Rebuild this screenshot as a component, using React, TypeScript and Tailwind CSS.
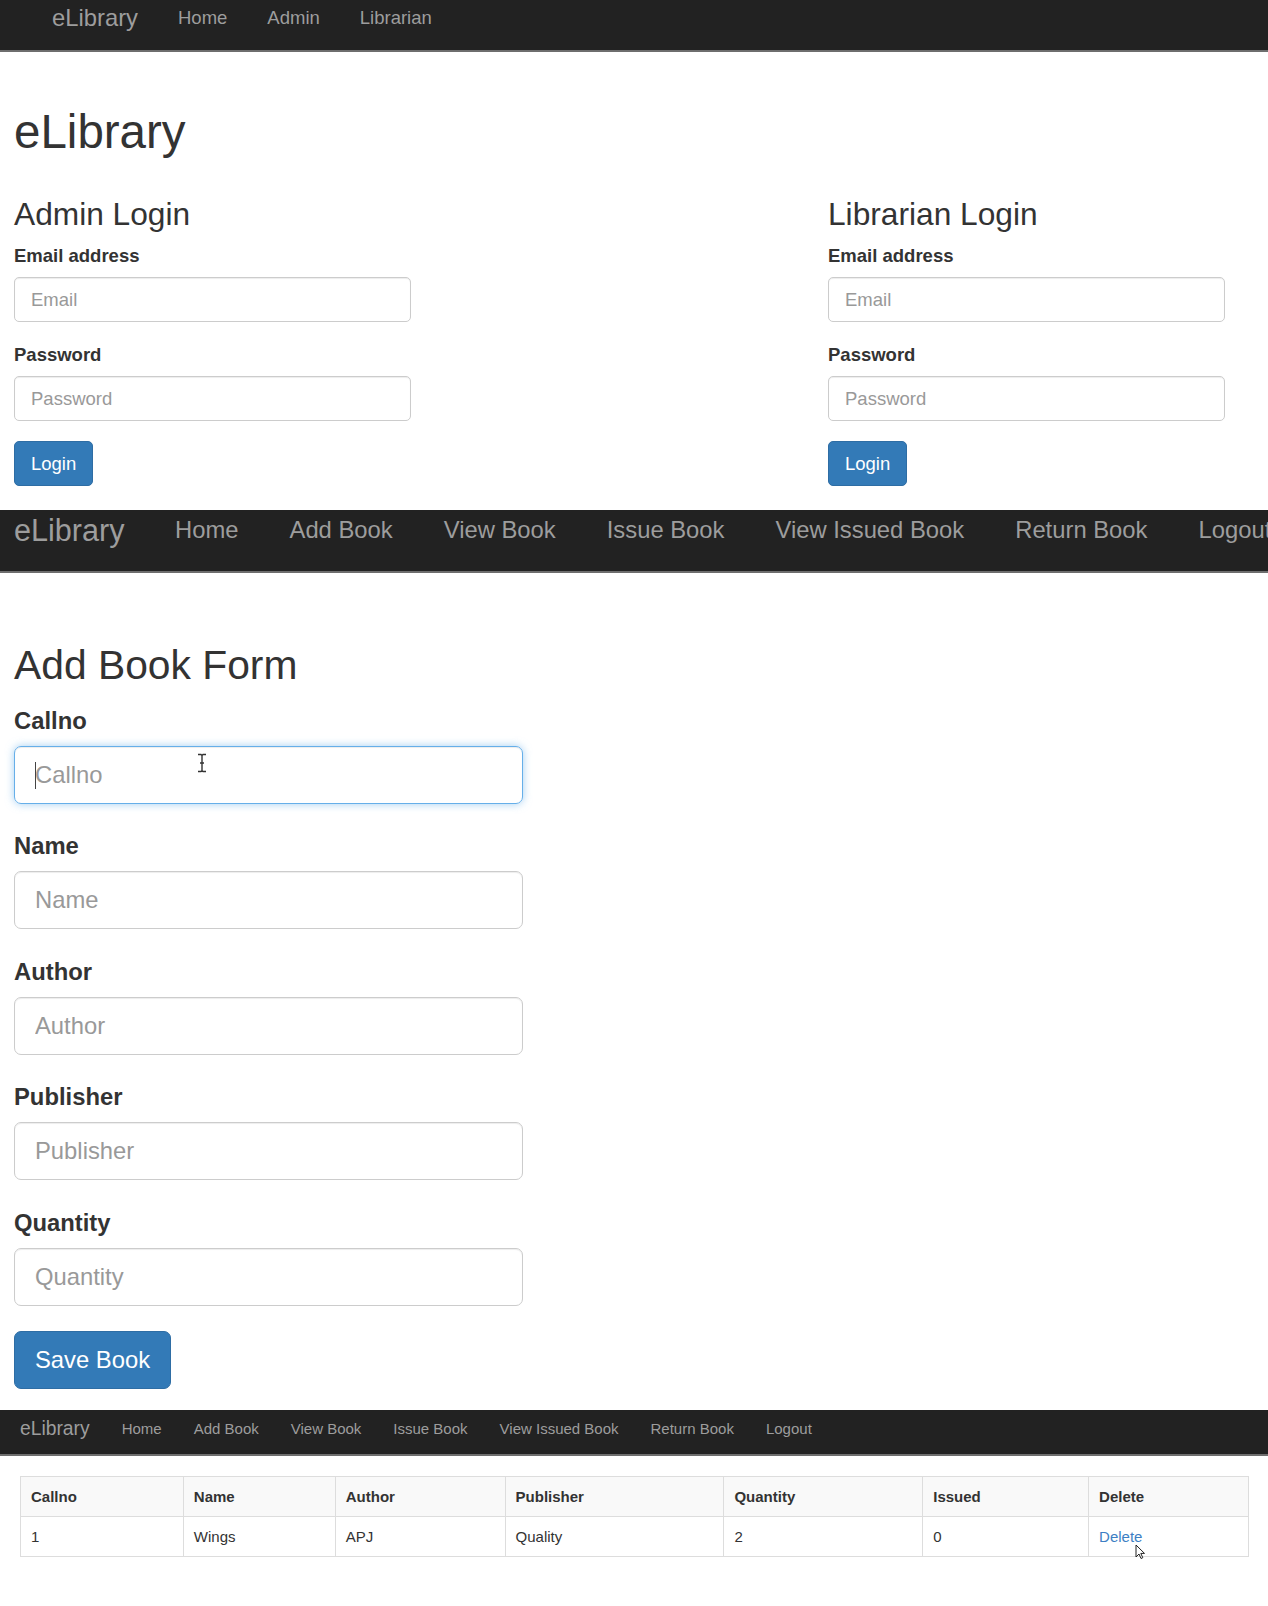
import React from 'react';

interface NavbarProps {
  items: string[];
  wrap: string;
  brand: string;
  link: string;
}

// dark bootstrap-like navbar, sizes passed in as full class strings
const Navbar: React.FC<NavbarProps> = ({ items, wrap, brand, link }) => (
  <nav className={`bg-[#222] border-b-2 border-[#6e6e6e] flex items-start whitespace-nowrap overflow-hidden ${wrap}`}>
    <span className={`text-[#9d9d9d] ${brand}`}>eLibrary</span>
    {items.map((item) => (
      <span key={item} className={`text-[#9d9d9d] ${link}`}>
        {item}
      </span>
    ))}
  </nav>
);

const LoginBox: React.FC<{ title: string }> = ({ title }) => (
  <div>
    <h3 className="mt-[39px] text-[31.7px] leading-[1.1] text-[#333]">{title}</h3>
    <div className="mt-[11px] mb-[20px]">
      <label className="block text-[18.5px] leading-[26px] font-bold text-[#333] mb-[8px]">Email address</label>
      <input
        placeholder="Email"
        className="block h-[45px] w-[397px] border border-[#ccc] rounded-[5px] px-[16px] text-[18.5px] text-[#555] placeholder:text-[#999] shadow-[inset_0_1px_1px_rgba(0,0,0,0.075)] outline-none"
      />
    </div>
    <div className="mb-[20px]">
      <label className="block text-[18.5px] leading-[26px] font-bold text-[#333] mb-[8px]">Password</label>
      <input
        placeholder="Password"
        className="block h-[45px] w-[397px] border border-[#ccc] rounded-[5px] px-[16px] text-[18.5px] text-[#555] placeholder:text-[#999] shadow-[inset_0_1px_1px_rgba(0,0,0,0.075)] outline-none"
      />
    </div>
    <button className="h-[45px] px-[16px] bg-[#337ab7] border border-[#2e6da4] rounded-[5px] text-white text-[18.5px] leading-[26px]">
      Login
    </button>
  </div>
);

const BookField: React.FC<{ name: string; focused?: boolean }> = ({ name, focused = false }) => (
  <div className="mb-[25.5px]">
    <label className="block text-[23.8px] leading-[34px] font-bold text-[#333] mb-[8px]">{name}</label>
    <div className="relative w-[509px]">
      <input
        placeholder={name}
        className={`block h-[58px] w-[509px] border rounded-[7px] px-[20px] text-[23.8px] text-[#555] placeholder:text-[#999] outline-none ${
          focused
            ? 'border-[#66afe9] shadow-[inset_0_1px_1px_rgba(0,0,0,0.075),0_0_8px_rgba(102,175,233,0.6)]'
            : 'border-[#ccc] shadow-[inset_0_1px_1px_rgba(0,0,0,0.075)]'
        }`}
      />
      {focused && (
        <>
          {/* text caret */}
          <span className="absolute left-[21px] top-[16px] h-[27px] w-px bg-[#444]" />
          {/* I-beam mouse pointer */}
          <svg className="absolute left-[183px] top-[7px]" width="10" height="20" viewBox="0 0 10 20">
            <path d="M1 1.5h3l1 1 1-1h3M5 2.5v15M1 18.5h3l1-1 1 1h3M3 10h4" stroke="#333" strokeWidth="1.4" fill="none" />
          </svg>
        </>
      )}
    </div>
  </div>
);

const columns = [
  { label: 'Callno', w: 'w-[163px]' },
  { label: 'Name', w: 'w-[152px]' },
  { label: 'Author', w: 'w-[170px]' },
  { label: 'Publisher', w: 'w-[219px]' },
  { label: 'Quantity', w: 'w-[199px]' },
  { label: 'Issued', w: 'w-[166px]' },
  { label: 'Delete', w: 'w-[160px]' },
];

const row = ['1', 'Wings', 'APJ', 'Quality', '2', '0'];

export default function App() {
  return (
    <div className="bg-white text-[#333] font-['Liberation_Sans',Arial,sans-serif]">
      {/* Home page */}
      <Navbar
        items={['Home', 'Admin', 'Librarian']}
        wrap="h-[52px] pl-[52px]"
        brand="text-[23.8px] leading-[35px] pr-[20px]"
        link="px-[20px] text-[18.5px] leading-[35px]"
      />
      <div className="px-[14px] pb-[24px]">
        <h1 className="mt-[54px] text-[47.5px] leading-[1.1] text-[#333]">eLibrary</h1>
        <div className="flex">
          <div className="w-[814px]">
            <LoginBox title="Admin Login" />
          </div>
          <LoginBox title="Librarian Login" />
        </div>
      </div>

      {/* Add book page */}
      <Navbar
        items={['Home', 'Add Book', 'View Book', 'Issue Book', 'View Issued Book', 'Return Book', 'Logout']}
        wrap="h-[63px] pl-[14px]"
        brand="text-[30.6px] leading-[40px] pr-[25px]"
        link="px-[25.5px] text-[23.8px] leading-[40px]"
      />
      <div className="px-[14px] pb-[21px]">
        <h3 className="mt-[69.5px] mb-[16.5px] text-[40.8px] leading-[1.1] text-[#333]">Add Book Form</h3>
        <BookField name="Callno" focused />
        <BookField name="Name" />
        <BookField name="Author" />
        <BookField name="Publisher" />
        <BookField name="Quantity" />
        <button className="h-[58px] px-[20px] bg-[#337ab7] border border-[#2e6da4] rounded-[7px] text-white text-[23.8px] leading-[34px]">
          Save Book
        </button>
      </div>

      {/* View book page */}
      <Navbar
        items={['Home', 'Add Book', 'View Book', 'Issue Book', 'View Issued Book', 'Return Book', 'Logout']}
        wrap="h-[46px] pl-[20px]"
        brand="text-[19.3px] leading-[37px] pr-[16px]"
        link="px-[16px] text-[15px] leading-[37px]"
      />
      <div className="pt-[20px] pl-[20px] pb-[49px]">
        <table className="w-[1229px] border-collapse text-[15px] text-[#333]">
          <thead>
            <tr className="bg-[#f9f9f9] h-[40px]">
              {columns.map((c) => (
                <th key={c.label} className={`${c.w} border border-[#ddd] px-[10px] text-left font-bold`}>
                  {c.label}
                </th>
              ))}
            </tr>
          </thead>
          <tbody>
            <tr className="h-[40px]">
              {row.map((cell, i) => (
                <td key={i} className="border border-[#ddd] px-[10px]">
                  {cell}
                </td>
              ))}
              <td className="relative border border-[#ddd] px-[10px]">
                <span className="text-[#3d7fc4]">Delete</span>
                <svg className="absolute left-[46px] top-[27px]" width="10" height="16" viewBox="0 0 10 16">
                  <path d="M1 1v12l3-3 2 4.5 1.8-.8-2-4.3H9.5z" fill="#fff" stroke="#222" strokeWidth="1" strokeLinejoin="round" />
                </svg>
              </td>
            </tr>
          </tbody>
        </table>
      </div>
    </div>
  );
}
